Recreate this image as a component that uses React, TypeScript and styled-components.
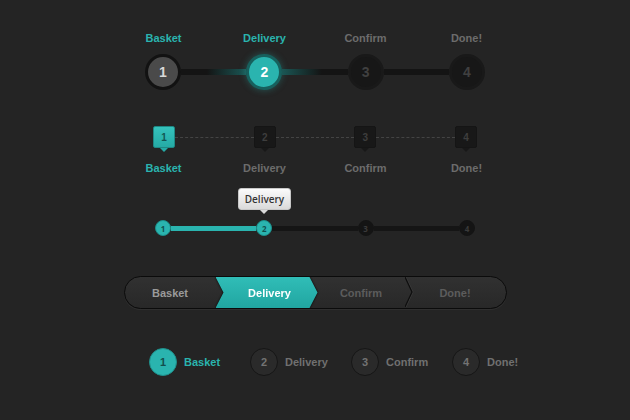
import styled, { createGlobalStyle } from 'styled-components';

const steps = ['Basket', 'Delivery', 'Confirm', 'Done!'];
const TEAL = '#2ab4af';

const GlobalStyle = createGlobalStyle`
  html, body {
    margin: 0;
    background: #242424;
    font-family: "Liberation Sans", Arial, sans-serif;
  }
`;

const Page = styled.div`
  width: 404px;
  margin: 0 auto;
  padding-top: 31px;
  display: flex;
  flex-direction: column;
`;

const Section = styled.div<{ $top: number }>`
  margin-top: ${(p) => p.$top}px;
  display: flex;
  flex-direction: column;
`;

const LabelRow = styled.div<{ $gap?: number }>`
  display: grid;
  grid-template-columns: repeat(4, 101px);
  margin-top: ${(p) => p.$gap || 0}px;
`;

const Label = styled.div<{ $active?: boolean }>`
  text-align: center;
  font-size: 11px;
  line-height: 14px;
  font-weight: bold;
  color: ${(p) => (p.$active ? TEAL : '#6c6c6c')};
`;

/* ---------- 1: big circles ---------- */
const Track = styled.div<{ $pad: number; $gap?: number }>`
  display: flex;
  align-items: center;
  padding: 0 ${(p) => p.$pad}px;
  margin-top: ${(p) => p.$gap || 0}px;
`;

const BigCircle = styled.div<{ $state: 'done' | 'active' | 'todo' }>`
  width: 36px;
  height: 36px;
  box-sizing: border-box;
  border-radius: 50%;
  flex: none;
  display: flex;
  align-items: center;
  justify-content: center;
  font-size: 14px;
  font-weight: bold;
  ${(p) =>
    p.$state === 'done'
      ? `background: #4a4a4a; border: 3px solid #121212; color: #d8d8d8;`
      : p.$state === 'active'
      ? `background: ${TEAL}; border: 3px solid #17605d; color: #fff;
         box-shadow: 0 0 7px rgba(42,180,175,0.35);`
      : `background: #171717; border: 3px solid #191919; color: #404040;`}
`;

const BigLine = styled.div<{ $glow?: 'left' | 'right' }>`
  flex: 1;
  height: 6px;
  background: ${(p) =>
    p.$glow === 'right'
      ? 'linear-gradient(to right, #141414 40%, #1a5755 100%)'
      : p.$glow === 'left'
      ? 'linear-gradient(to right, #1a5755 0%, #141414 60%)'
      : '#141414'};
`;

/* ---------- 2: square markers ---------- */
const Square = styled.div<{ $active?: boolean }>`
  position: relative;
  width: 22px;
  height: 22px;
  box-sizing: border-box;
  border-radius: 2px;
  flex: none;
  display: flex;
  align-items: center;
  justify-content: center;
  font-size: 10px;
  font-weight: bold;
  background: ${(p) => (p.$active ? 'linear-gradient(#35c2bc, #25aaa5)' : '#181818')};
  border: 1px solid ${(p) => (p.$active ? '#1e8884' : '#151515')};
  color: ${(p) => (p.$active ? '#135653' : '#3e3e3e')};

  &::after {
    content: '';
    position: absolute;
    left: 50%;
    bottom: -5px;
    margin-left: -4px;
    border: 4px solid transparent;
    border-bottom: 0;
    border-top-color: ${(p) => (p.$active ? '#25aaa5' : '#181818')};
  }
`;

const Dashed = styled.div`
  flex: 1;
  border-top: 1px dashed #444;
`;

/* ---------- 3: small dots + tooltip ---------- */
const TipCell = styled.div`
  display: flex;
  justify-content: center;
  height: 22px;
`;

const Tooltip = styled.div`
  position: relative;
  box-sizing: border-box;
  height: 22px;
  padding: 0 6px;
  border-radius: 3px;
  background: linear-gradient(#fbfbfb, #dadada);
  border: 1px solid #c8c8c8;
  font-family: "Open Sans", "DejaVu Sans", sans-serif;
  font-size: 10px;
  font-weight: 600;
  line-height: 20px;
  color: #333;

  &::after {
    content: '';
    position: absolute;
    left: 50%;
    bottom: -5px;
    margin-left: -4px;
    border: 4px solid transparent;
    border-bottom: 0;
    border-top-color: #dadada;
  }
`;

const Dot = styled.div<{ $active?: boolean }>`
  width: 16px;
  height: 16px;
  box-sizing: border-box;
  border-radius: 50%;
  flex: none;
  display: flex;
  align-items: center;
  justify-content: center;
  font-family: "Open Sans", sans-serif;
  font-size: 8px;
  font-weight: bold;
  background: ${(p) => (p.$active ? TEAL : '#141414')};
  border: 1px solid ${(p) => (p.$active ? '#1c8e8a' : '#141414')};
  color: ${(p) => (p.$active ? '#11504e' : '#3a3a3a')};
`;

const DotLine = styled.div<{ $active?: boolean }>`
  flex: 1;
  height: 5px;
  background: ${(p) => (p.$active ? TEAL : '#151515')};
`;

/* ---------- 4: pill breadcrumb ---------- */
const Pill = styled.div`
  align-self: center;
  width: 383px;
  height: 33px;
  box-sizing: border-box;
  border-radius: 17px;
  border: 1.5px solid #0b0b0b;
  background: linear-gradient(#313131, #282828);
  box-shadow: 0 1px 0 rgba(255, 255, 255, 0.05);
  display: flex;
  overflow: hidden;
`;

const Crumb = styled.div<{ $w: number; $tone: 'light' | 'dim' }>`
  position: relative;
  width: ${(p) => p.$w}px;
  flex: none;
  display: flex;
  align-items: center;
  justify-content: center;
  font-size: 11px;
  font-weight: bold;
  color: ${(p) => (p.$tone === 'light' ? '#9a9a9a' : '#5c5c5c')};
`;

const ChevronWrap = styled.div`
  width: 102px;
  flex: none;
  filter: drop-shadow(0 0 1px #000);
`;

const Chevron = styled.div`
  height: 100%;
  display: flex;
  align-items: center;
  justify-content: center;
  padding-left: 6px;
  box-sizing: border-box;
  font-size: 11px;
  font-weight: bold;
  color: #fff;
  background: linear-gradient(#30bdb7, #21a6a1);
  clip-path: polygon(0 0, calc(100% - 8px) 0, 100% 50%, calc(100% - 8px) 100%, 0 100%, 8px 50%);
`;

const Separator = styled.svg`
  position: absolute;
  left: 0;
  top: 0;
`;

/* ---------- 5: inline circles ---------- */
const InlineRow = styled.div`
  display: grid;
  grid-template-columns: repeat(4, 101px);
  height: 28px;
`;

const InlineStep = styled.div`
  display: flex;
  align-items: center;
  gap: 7px;
  padding-left: 36px;
`;

const Badge = styled.div<{ $active?: boolean }>`
  width: 28px;
  height: 28px;
  box-sizing: border-box;
  border-radius: 50%;
  flex: none;
  display: flex;
  align-items: center;
  justify-content: center;
  font-size: 11px;
  font-weight: bold;
  background: ${(p) => (p.$active ? TEAL : '#2a2a2a')};
  border: 1.5px solid ${(p) => (p.$active ? '#1f8f8b' : '#161616')};
  color: ${(p) => (p.$active ? '#134f4d' : '#737373')};
`;

const InlineLabel = styled.span<{ $active?: boolean }>`
  font-size: 11px;
  font-weight: bold;
  color: ${(p) => (p.$active ? TEAL : '#707070')};
`;

function App() {
  return (
    <>
      <GlobalStyle />
      <Page>
        <Section $top={0}>
          <LabelRow>
            {steps.map((s, i) => (
              <Label key={s} $active={i < 2}>
                {s}
              </Label>
            ))}
          </LabelRow>
          <Track $pad={32} $gap={9}>
            <BigCircle $state="done">1</BigCircle>
            <BigLine $glow="right" />
            <BigCircle $state="active">2</BigCircle>
            <BigLine $glow="left" />
            <BigCircle $state="todo">3</BigCircle>
            <BigLine />
            <BigCircle $state="todo">4</BigCircle>
          </Track>
        </Section>

        <Section $top={36}>
          <Track $pad={40}>
            <Square $active>1</Square>
            <Dashed />
            <Square>2</Square>
            <Dashed />
            <Square>3</Square>
            <Dashed />
            <Square>4</Square>
          </Track>
          <LabelRow $gap={13}>
            {steps.map((s, i) => (
              <Label key={s} $active={i === 0}>
                {s}
              </Label>
            ))}
          </LabelRow>
        </Section>

        <Section $top={13}>
          <LabelRow>
            <TipCell />
            <TipCell>
              <Tooltip>Delivery</Tooltip>
            </TipCell>
            <TipCell />
            <TipCell />
          </LabelRow>
          <Track $pad={42} $gap={10}>
            <Dot $active>1</Dot>
            <DotLine $active />
            <Dot $active>2</Dot>
            <DotLine />
            <Dot>3</Dot>
            <DotLine />
            <Dot>4</Dot>
          </Track>
        </Section>

        <Section $top={40}>
          <Pill>
            <Crumb $w={91} $tone="light">Basket</Crumb>
            <ChevronWrap>
              <Chevron>Delivery</Chevron>
            </ChevronWrap>
            <Crumb $w={87} $tone="dim">Confirm</Crumb>
            <Crumb $w={101} $tone="dim">
              <Separator width="10" height="30" viewBox="0 0 10 30">
                <polyline points="0,0 7,15 0,30" fill="none" stroke="#3a3a3a" strokeWidth="1" transform="translate(1,0)" />
                <polyline points="0,0 7,15 0,30" fill="none" stroke="#0e0e0e" strokeWidth="1.2" />
              </Separator>
              Done!
            </Crumb>
          </Pill>
        </Section>

        <Section $top={39}>
          <InlineRow>
            {steps.map((s, i) => (
              <InlineStep key={s}>
                <Badge $active={i === 0}>{i + 1}</Badge>
                <InlineLabel $active={i === 0}>{s}</InlineLabel>
              </InlineStep>
            ))}
          </InlineRow>
        </Section>
      </Page>
    </>
  );
}

export default App;
